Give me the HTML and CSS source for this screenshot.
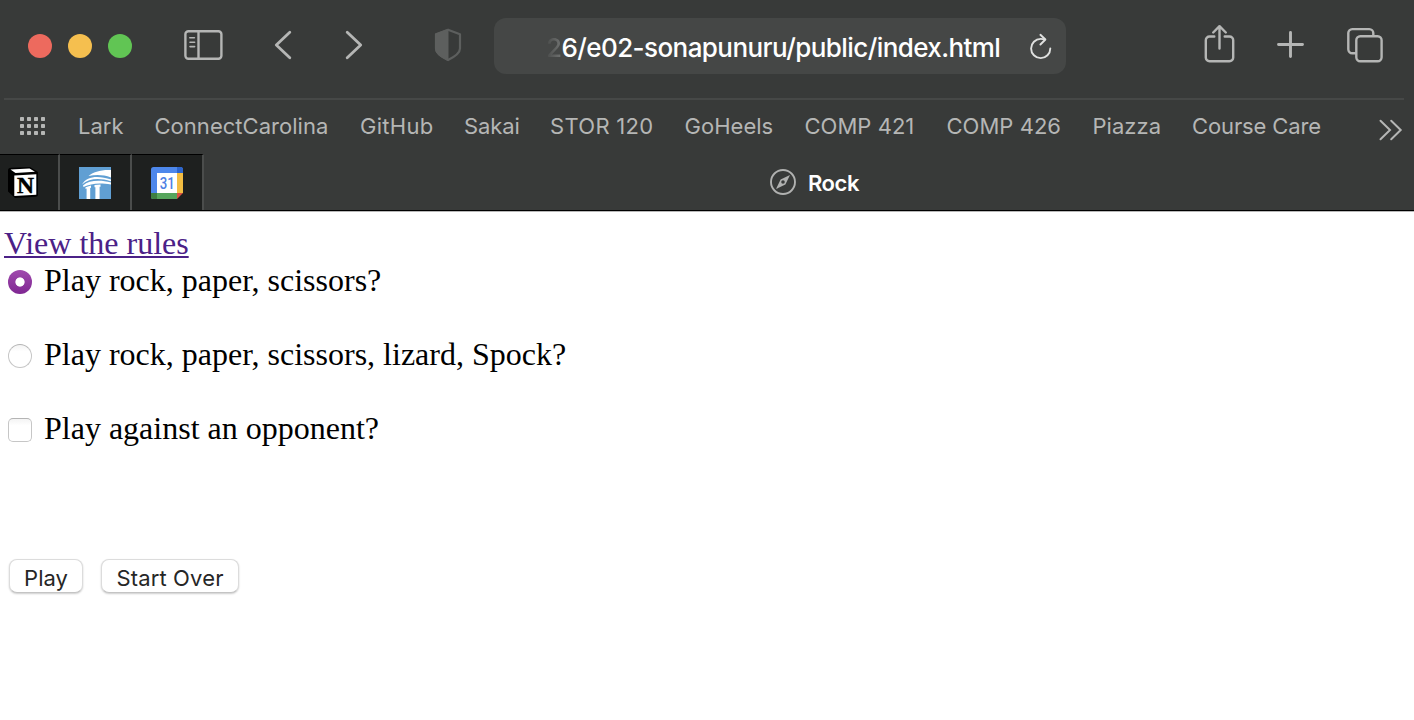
FILE: index.html
```html
<!DOCTYPE html>
<html lang="en">
<head>
<meta charset="utf-8">
<title>Rock</title>
<link rel="stylesheet" href="styles.css">
</head>
<body>
<header class="chrome">
  <div class="toolbar">
    <div class="lights"><i class="light red"></i><i class="light yellow"></i><i class="light green"></i></div>
    <svg class="icon sidebar" width="40" height="32" viewBox="0 0 40 32" fill="none" stroke="#b5b6b5" stroke-width="2.4"><rect x="1.400" y="2.2" width="36" height="27.6" rx="3"/><path d="M14.500 2v28"/><path d="M5.800 8.8h4.600M6 13.200h4.600M6 17.600h4.600" stroke-width="1.6" stroke-linecap="round"/></svg>
    <svg class="icon back" width="18" height="30" viewBox="0 0 18 30" fill="none" stroke="#b5b6b5" stroke-width="2.8" stroke-linecap="round" stroke-linejoin="round"><path d="M15.800 2.200L2.300 15l13.500 12.800"/></svg>
    <svg class="icon forward" width="18" height="30" viewBox="0 0 18 30" fill="none" stroke="#b5b6b5" stroke-width="2.8" stroke-linecap="round" stroke-linejoin="round"><path d="M2.200 2.200L15.700 15 2.200 27.800"/></svg>
    <svg class="icon shield" width="28" height="34" viewBox="0 0 28 34"><path d="M14 1.8L26 6.300v14.200c0 4.800-5.400 8.300-12 11.500C7.400 28.800 2 25.300 2 20.500V6.300z" fill="none" stroke="#5d5f5e" stroke-width="2.200" stroke-linejoin="round"/><path d="M14.500 .8L1 5.800v14.800c0 5.200 5.700 9 13.500 12.600z" fill="#5d5f5e"/></svg>
    <div class="address">
      <span class="url"><span class="faded">2</span>6/e02-sonapunuru/public/index.html</span>
      <svg class="reload" width="24" height="28" viewBox="0 0 24 28" fill="none" stroke="#dfe0df" stroke-width="1.900" stroke-linecap="round" stroke-linejoin="round"><path d="M21.300 16.500a9.600 9.600 0 1 1-9.600-9.600c1.500 0 2.700.1 4 .5"/><path d="M11.400 2.800l5 4.700-5 5"/></svg>
    </div>
    <svg class="icon share" width="32" height="40" viewBox="0 0 32 40" fill="none" stroke="#b5b6b5" stroke-width="2.400" stroke-linecap="round" stroke-linejoin="round"><path d="M10.300 12.500H5.500a3.700 3.700 0 0 0-3.700 3.700v17.300a3.700 3.700 0 0 0 3.700 3.700h20a3.700 3.700 0 0 0 3.700-3.700V16.200a3.700 3.700 0 0 0-3.700-3.700h-4.800"/><path d="M15.500 24.500V2.500M9.200 8.500l6.300-6.300 6.300 6.300"/></svg>
    <svg class="icon plus" width="28" height="28" viewBox="0 0 28 28" fill="none" stroke="#b5b6b5" stroke-width="2.900" stroke-linecap="round"><path d="M13.500 1.500v24M1.500 13.500h24"/></svg>
    <svg class="icon overview" width="36" height="36" viewBox="0 0 36 36" fill="none" stroke="#b5b6b5" stroke-width="2.400"><rect x="9.300" y="9.200" width="25.300" height="25" rx="4"/><path d="M9 26.200H5.300a4 4 0 0 1-4-4V6.100a4 4 0 0 1 4-4h17a4 4 0 0 1 4 4v3"/></svg>
  </div>
  <nav class="bookmarks">
    <svg class="grid-icon" width="26" height="18" viewBox="0 0 26 18" fill="#b5b6b5"><g id="dots"><rect width="4" height="4" rx=".7"/><rect x="7" width="4" height="4" rx=".7"/><rect x="14" width="4" height="4" rx=".7"/><rect x="21" width="4" height="4" rx=".7"/></g><use href="#dots" y="7"/><use href="#dots" y="14"/></svg>
    <span class="mark snug">Lark</span><span class="mark snug">ConnectCarolina</span><span class="mark">GitHub</span><span class="mark tight">Sakai</span><span class="mark">STOR 120</span><span class="mark snug">GoHeels</span><span class="mark snug">COMP 421</span><span class="mark snug">COMP 426</span><span class="mark snug">Piazza</span><span class="mark tight">Course Care</span>
    <svg class="more" width="24" height="22" viewBox="0 0 24 22" fill="none" stroke="#b5b6b5" stroke-width="2" stroke-linecap="round"><path d="M1.500 1.800L11 11l-9.500 9.200M12.200 1.800l9.500 9.200-9.500 9.200"/></svg>
  </nav>
  <div class="tabs">
    <div class="pinned first">
      <svg width="32" height="34" viewBox="0 0 32 34"><path d="M3 .8L22 0l8 5V27.500c0 1.500-1 2.200-2.500 2.300L7 31l-7-6.500V3.300C0 1.800 1 .9 3 .8z" fill="#000"/><path d="M2.500 2.600L21.500 1.600l5.500 3.200L7.500 6.100z" fill="#fff"/><path d="M6.300 8.400L28.300 7.200v20.500L6.300 28.900z" fill="#fff"/><text class="notion-n" x="9" y="25.600" textLength="17" lengthAdjust="spacingAndGlyphs">N</text></svg>
    </div>
    <div class="pinned">
      <svg width="32" height="32" viewBox="0 0 32 32"><path d="M0 0h32v32H0z" fill="#609fd3"/><path d="M9.500 9C14 5 22 2.500 32 3v7.500C24 7.500 17 7.500 9.500 9z" fill="#fff"/><path d="M3 17.500C8 8.500 20 8.500 32 12.500v1.800C20 10.500 10 11.500 3 17.500z" fill="#fff"/><path d="M4 18.500C10 13.200 21 12.800 32 15.500v2C20 15.500 12 16.500 4.500 20z" fill="#fff"/><path d="M6.500 20.200L12 18.400v2.300l-.8.300V32H7.600V21.600l-1.100.3zM15.500 18l6-.4v2.200h-.9V32h-4.200V20.200h-.9z" fill="#fff"/></svg>
    </div>
    <div class="pinned">
      <svg width="32" height="32" viewBox="0 0 32 32"><rect width="32" height="32" rx="2.500" fill="#4d87eb"/><path d="M26 0h3.500A2.500 2.500 0 0 1 32 2.500V6h-6z" fill="#2d65cc"/><path d="M26 6h6v20h-6z" fill="#f3bd42"/><path d="M0 26h26v6H2.500A2.500 2.500 0 0 1 0 29.500z" fill="#56a55c"/><path d="M0 26h6v6H2.500A2.500 2.500 0 0 1 0 29.500z" fill="#3e7f43"/><path d="M26 26h6v6h-6z" fill="#1e201f"/><path d="M26 26h6l-6 6z" fill="#d95040"/><path d="M6 6h20v20H6z" fill="#fff"/><text class="cal-day" x="8.800" y="22" textLength="15" lengthAdjust="spacingAndGlyphs">31</text></svg>
    </div>
    <div class="active">
      <svg width="26" height="26" viewBox="0 0 26 26"><circle cx="13" cy="13" r="12" fill="none" stroke="#b0b1b0" stroke-width="1.900"/><path fill-rule="evenodd" d="M20 6l-4.600 9.400L6 20l4.600-9.400zM13 11.200a1.800 1.800 0 1 0 0 3.600 1.800 1.800 0 0 0 0-3.600z" fill="#b0b1b0"/></svg>
      <span class="title">Rock</span>
    </div>
  </div>
</header>
<main class="page">
  <a class="rules" href="#">View the rules</a>
  <form class="form">
    <label class="option"><input class="control radio" type="radio" name="game" checked><span>Play rock, paper, scissors?</span></label>
    <label class="option"><input class="control radio" type="radio" name="game"><span>Play rock, paper, scissors, lizard, Spock?</span></label>
    <label class="option"><input class="control check" type="checkbox"><span>Play against an opponent?</span></label>
    <div class="buttons"><button class="btn play" type="button">Play</button><button class="btn over" type="button">Start Over</button></div>
  </form>
</main>
</body>
</html>
```
FILE: styles.css
```css
* { box-sizing: border-box; }
body { margin: 0; height: 720px; overflow: hidden; background: #fff; }
svg { display: block; flex: none; }
.chrome { background: #383a39; font-family: Inter, sans-serif; height: 212px; border-bottom: 1px solid #b8b8b8; }
.toolbar { display: flex; align-items: flex-start; height: 98px; padding-left: 28px; }
.lights { display: flex; gap: 16px; margin-top: 34px; }
.light { width: 24px; height: 24px; border-radius: 50%; }
.red { background: #ed6a5e; }
.yellow { background: #f5bf4f; }
.green { background: #61c554; }
.sidebar { margin: 29px 0 0 52px; }
.back { margin: 30px 0 0 50px; }
.forward { margin: 30px 0 0 53px; }
.shield { margin: 28px 0 0 71px; }
.address { display: flex; width: 572px; height: 56px; margin: 18px 0 0 32px; padding-left: 52px; border-radius: 12px; background: #454746; }
.url { width: 455px; margin-top: 13px; color: #fff; font-size: 26px; font-weight: 500; line-height: 34px; letter-spacing: -0.58px; white-space: nowrap; }
.faded { background: linear-gradient(90deg, #484a49, #707271); -webkit-background-clip: text; background-clip: text; color: transparent; }
.reload { margin: 14px 0 0 28px; }
.share { margin: 24px 0 0 138px; }
.plus { margin: 31px 0 0 41px; }
.overview { margin: 27px 0 0 42px; }
.bookmarks { display: grid; grid-template-columns: 58px 76.5px 205.5px 104px 86px 134.5px 120px 142px 146px 99.5px 187px 24px; height: 56px; margin: 0 10px 0 4px; padding-left: 16px; border-top: 2px solid #464847; color: #b5b6b5; font-size: 22px; line-height: 28px; letter-spacing: 0.3px; white-space: nowrap; }
.grid-icon { margin-top: 17px; }
.mark { margin-top: 12px; }
.snug { letter-spacing: 0.03px; }
.tight { letter-spacing: -0.13px; }
.more { margin-top: 19px; }
.tabs { display: flex; height: 57px; border-bottom: 1px solid #000; }
.pinned { display: flex; justify-content: center; width: 72px; padding-top: 12px; background: #1e201f; border-top: 1px solid #000; border-right: 2px solid #4b4d4c; }
.first { width: 60px; justify-content: flex-start; padding-left: 8px; }
.notion-n { font: bold 24px "Liberation Serif", serif; stroke: #000; stroke-width: 0.5px; }
.cal-day { font: 500 16.5px Roboto, sans-serif; fill: #4d80e4; }
.active { display: flex; flex: 1; justify-content: center; gap: 12px; padding: 15px 0 0 11px; }
.title { margin-top: 1px; color: #fff; font-size: 22px; font-weight: 600; line-height: 26px; letter-spacing: -0.4px; }
.page { display: flex; flex-direction: column; align-items: flex-start; padding: 13px 0 0 4px; font: 32px/36px "Liberation Serif", serif; color: #000; }
.rules { color: #4b2187; text-decoration-thickness: 2px; text-underline-offset: 2px; white-space: nowrap; }
.form { display: flex; flex-direction: column; gap: 37px; }
.option { display: flex; height: 37px; line-height: 38px; white-space: nowrap; }
.control { appearance: none; width: 24px; height: 24px; margin: 9px 12px 0 4px; border: 1px solid #c6c6c6; border-top-color: #b4b4b4; background: linear-gradient(#f4f4f4, #fff 30%); }
.radio { border-radius: 50%; }
.radio:checked { border: 0; background: radial-gradient(circle, #fff 4.2px, transparent 5px), linear-gradient(#a04aae, #7f2692); }
.check { border-radius: 5px; }
.buttons { display: flex; gap: 18px; margin: 76px 0 0 5px; }
.btn { height: 34px; padding: 3px 0 0; border: 1px solid #dcdcdc; border-bottom-color: #c4c4c4; border-radius: 8px; background: #fff; box-shadow: 0 1px 2px rgba(0, 0, 0, .2); color: #262626; font: 22px/28px Inter, sans-serif; white-space: nowrap; }
.play { width: 74px; }
.over { width: 138px; letter-spacing: 0.15px; }
```
